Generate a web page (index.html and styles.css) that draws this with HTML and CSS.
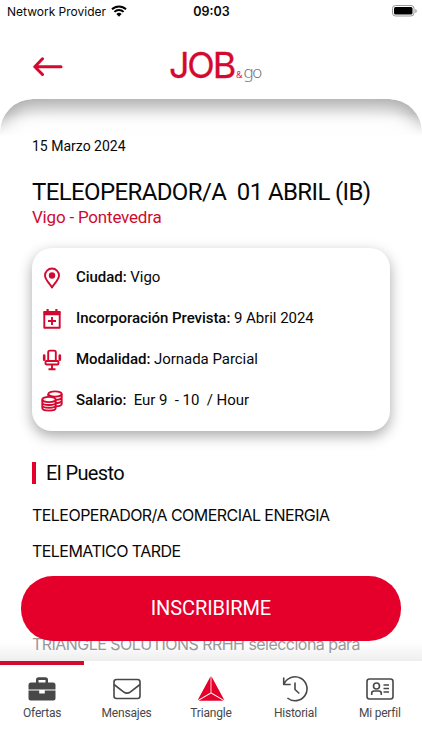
FILE: index.html
```html
<!DOCTYPE html>
<html lang="es">
<head>
<meta charset="utf-8">
<title>Job &amp; go</title>
<link rel="stylesheet" href="styles.css">
</head>
<body>
<div class="app">
  <div class="status">
    <div class="carrier"><span>Network Provider</span>
      <svg width="16" height="12" viewBox="0 0 16 12"><path d="M1 4.3a10 10 0 0 1 14 0M3.4 6.9a6.6 6.6 0 0 1 9.200 0" fill="none" stroke="#000" stroke-width="2"/><path d="M5.4 9a3.8 3.8 0 0 1 5.200 0L8 11.700z"/></svg>
    </div>
    <span class="clock">09:03</span>
    <svg class="battery" width="26" height="12" viewBox="0 0 26 12"><rect x=".5" y=".5" width="21.5" height="10.5" rx="3" fill="none" stroke="#999"/><rect x="2" y="2" width="18.5" height="7.5" rx="1.5"/><path d="M23.4 4v4q1.3-.6 1.3-2t-1.3-2z" fill="#888"/></svg>
  </div>
  <header class="header">
    <svg class="back" width="30" height="20" viewBox="0 0 30 20"><path d="M9.500 1.800 1.800 9.700 9.500 17.500M2 9.700h26" fill="none" stroke="#d4092f" stroke-width="3" stroke-linecap="round" stroke-linejoin="round"/></svg>
    <div class="logo"><span class="job">JOB</span><span class="amp">&amp;</span><span class="go">go</span></div>
  </header>
  <main class="content">
    <p class="date">15 Marzo 2024</p>
    <h1 class="title">TELEOPERADOR/A&nbsp; 01 ABRIL (IB)</h1>
    <p class="place">Vigo - Pontevedra</p>
    <section class="card">
      <div class="row"><svg width="22" height="22" viewBox="0 0 22 22" class="line"><path d="M11 20.500C9.500 17.500 4 12.700 4 8.500a7 7 0 0 1 14 0c0 4.200-5.500 9-7 12z"/><circle cx="11" cy="8.500" r="3.200" class="solid"/></svg><p><b>Ciudad:</b> Vigo</p></div>
      <div class="row"><svg width="22" height="22" viewBox="0 0 22 22" class="line"><path d="M3.300 4h15.400v15.700H3.300z"/><path d="M2.600 3.300h16.800v4H2.600zM5.500 1h2.200v4H5.500zM14.300 1h2.200v4h-2.200z" class="solid"/><path d="M11 9v8M7 13h8"/></svg><p><b>Incorporación Prevista:</b> 9 Abril 2024</p></div>
      <div class="row"><svg width="22" height="22" viewBox="0 0 22 22" class="line"><path d="M7.200 12V3.200Q7.200 1.600 8.800 1.600h4.400q1.600 0 1.600 1.600V12M5.700 12h10.600q1.200 0 1.200 1.200v1q0 1.300-1.300 1.300H5.800q-1.300 0-1.300-1.300v-1Q4.500 12 5.700 12zM11 15.500v4.500M7.500 20.200h7"/><path d="M3.200 6.500v4.300M18.800 6.500v4.300" stroke-width="2.600" stroke-linecap="round"/></svg><p><b>Modalidad:</b> Jornada Parcial</p></div>
      <div class="row"><svg width="22" height="22" viewBox="0 0 22 22" class="line"><ellipse cx="14" cy="4" rx="6.700" ry="2.600"/><path d="M7.300 4v3M20.700 4v10c0 1.200-2 2.200-5.700 2.400M20.700 7.300c0 1.400-2.500 2.400-5.700 2.600M20.700 10.600c0 1.400-2.500 2.400-5.700 2.600"/><ellipse cx="8" cy="9.500" rx="6.700" ry="2.600" fill="#fff"/><path d="M1.300 9.500V18c0 3.500 13.400 3.500 13.400 0V9.500M1.300 12.500c0 3.300 13.400 3.300 13.400 0M1.300 15.300c0 3.300 13.400 3.300 13.400 0"/></svg><p><b>Salario:</b>&nbsp; Eur 9&nbsp; - 10&nbsp; / Hour</p></div>
    </section>
    <h2 class="section">El Puesto</h2>
    <div class="description">
      <p class="d1">TELEOPERADOR/A COMERCIAL ENERGIA</p>
      <p class="d2">TELEMATICO TARDE</p>
    </div>
  </main>
  <div class="action">
    <button class="apply">INSCRIBIRME</button>
    <p class="next">TRIANGLE SOLUTIONS RRHH selecciona para</p>
  </div>
  <nav class="tabs">
    <div class="tab active"><svg width="30" height="28" viewBox="0 0 30 28"><path fill="#484848" fill-rule="evenodd" d="M4 7.500h5V5q0-2.700 2.500-2.700h7Q21 2.300 21 5v2.500h5q2.500 0 2.500 2.500v4.500h-27V10Q1.500 7.500 4 7.500zm7.500 0h7V5h-7zM1.500 15.500h10.700v3h5.600v-3h10.700v8q0 2-2 2h-23q-2 0-2-2z"/></svg><span>Ofertas</span></div>
    <div class="tab"><svg width="30" height="28" viewBox="0 0 30 28" class="gray"><rect x="2" y="4.500" width="26" height="19" rx="2.500"/><path d="m2 9.500 9.500 7.300q3.500 2.700 7 0L28 9.500"/></svg><span>Mensajes</span></div>
    <div class="tab"><svg width="30" height="28" viewBox="0 0 30 28" fill="#e4002b"><path d="M14.600 1.200V17.500L1.600 25.200zM15.400 1.200V17.500L28.400 25.200zM2.500 25.800l12.500-7.300 12.500 7.300z"/></svg><span>Triangle</span></div>
    <div class="tab"><svg width="30" height="28" viewBox="0 0 30 28" class="gray"><path d="M3.700 2.500v7h7M4 9a12 12 0 1 1 3.400 14M15 7.500v7l4.300 4"/></svg><span>Historial</span></div>
    <div class="tab"><svg width="30" height="28" viewBox="0 0 30 28" class="gray"><rect x="2" y="4" width="26" height="20" rx="2.500"/><circle cx="11.500" cy="11" r="3"/><path d="M6.700 20v-1.500q0-2.500 2.500-2.500h4.600q2.500 0 2.500 2.500V20M18.500 10H24M18.500 13.500H24M18.500 17H24"/></svg><span>Mi perfil</span></div>
  </nav>
</div>
</body>
</html>
```
FILE: styles.css
```css
* { box-sizing: border-box; }
body, p, h1, h2 { margin: 0; font-weight: 400; }
body { background: #fff; color: #080808; font-family: Roboto, sans-serif; }
svg { display: block; flex: none; }
.app { width: 422px; height: 750px; overflow: hidden; display: flex; flex-direction: column; }
.status { height: 22px; flex: none; display: grid; grid-template-columns: 1fr auto 1fr; align-items: center; padding: 0 6px 0 7px; font-family: Inter, sans-serif; }
.carrier { display: flex; align-items: center; gap: 5px; font-size: 12px; white-space: nowrap; }
.carrier svg { margin-top: -1px; }
.clock { font-size: 12.5px; font-weight: 600; }
.battery { justify-self: end; margin: -1px -2px 0 0; }
.header { height: 77px; flex: none; display: grid; grid-template-columns: 169px auto 1fr; }
.back { margin: 35px 0 0 33px; }
.logo { display: flex; align-items: baseline; height: 60px; padding-top: 21px; line-height: 44px; }
.job { font: 400 36px/44px Inter, sans-serif; color: #d4092f; letter-spacing: -2.2px; -webkit-text-stroke: .3px #d4092f; }
.amp { font: 400 9px/12px "Open Sans", sans-serif; color: #d4092f; margin-left: 2px; }
.go { font: 400 17px/20px "Noto Sans", "Open Sans", sans-serif; font-weight: 300; color: #777; letter-spacing: -1.5px; margin-left: 1px; }
.content { flex: 1; min-height: 0; padding: 0 32px; position: relative; }
.content::before { content: ""; position: absolute; z-index: -1; left: 0; right: 0; top: 0; height: 37px; border-radius: 33px 33px 0 0; box-shadow: inset 0 9px 20px -1px rgba(0,0,0,.36); clip-path: inset(0); -webkit-mask-image: linear-gradient(#000 40%, transparent); mask-image: linear-gradient(#000 40%, transparent); }
.date { font-size: 14px; line-height: 20px; padding-top: 37px; }
.title { font-size: 24px; line-height: 30px; margin-top: 21px; white-space: nowrap; letter-spacing: -.62px; }
.place { font-size: 17px; line-height: 22px; margin-top: -1px; color: #cf0a31; letter-spacing: -.2px; }
.card { margin-top: 20px; height: 183px; width: 358px; border-radius: 20px; padding: 9px 10px 0 9px; background: #fff; box-shadow: 0 5px 14px rgba(0,0,0,.34); }
.row { height: 40.8px; display: flex; align-items: center; gap: 13px; font-size: 15px; letter-spacing: -.04px; }
.row b { font-weight: 500; }
.line { fill: none; stroke: #d4092f; stroke-width: 1.9; stroke-linejoin: round; position: relative; top: 1px; }
.line .solid { fill: #d4092f; stroke: none; }
.section { margin-top: 31px; border-left: 4px solid #e4002b; padding-left: 10px; font-size: 20px; line-height: 22px; letter-spacing: -.6px; }
.description { font-family: Inter, sans-serif; font-size: 16px; line-height: 36px; padding-top: 13px; white-space: nowrap; letter-spacing: -.54px; }
.action { flex: none; height: 85px; padding: 0 22px; background: linear-gradient(#fff 78%, #eee); }
.apply { display: block; width: 379.5px; height: 64.5px; margin: 0 0 0 -.8px; border: 0; border-radius: 32px; background: #e4002b; color: #fff; font: 400 20px/64px Roboto, sans-serif; position: relative; padding: 0; letter-spacing: -.1px; }
.next { margin: -9px 0 0 10px; font: 400 16px/24px Inter, sans-serif; color: #999; white-space: nowrap; letter-spacing: -.53px; }
.content { margin-bottom: 0; }
.tabs { flex: none; height: 89px; display: grid; grid-template-columns: repeat(5, 1fr); background: #fff; position: relative; }
.tab { border-top: 4px solid transparent; padding-top: 9.5px; display: flex; flex-direction: column; align-items: center; gap: 2.5px; font-size: 12px; line-height: 16px; letter-spacing: -.2px; color: #484848; }
.active { border-color: #d4092f; }
.gray { fill: none; stroke: #484848; stroke-width: 1.6; stroke-linejoin: round; }
```
